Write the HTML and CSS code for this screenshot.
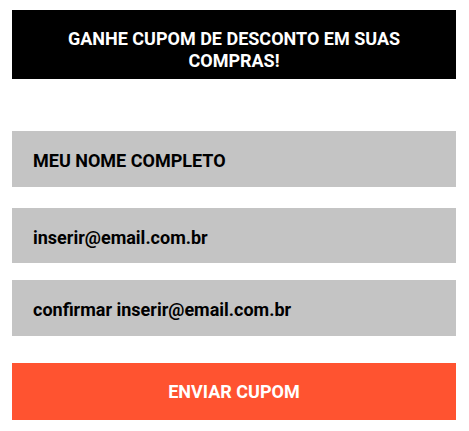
FILE: index.html
```html
<!DOCTYPE html>
<html>
<head>
<meta charset="utf-8">
<link rel="stylesheet" href="styles.css">
</head>
<body>
<div class="wrap">
  <div class="banner">GANHE CUPOM DE DESCONTO EM SUAS<br>COMPRAS!</div>
  <form class="form">
    <div class="field field-name">MEU NOME COMPLETO</div>
    <div class="field field-email">inserir@email.com.br</div>
    <div class="field field-confirm">confirmar inserir@email.com.br</div>
    <div class="button">ENVIAR CUPOM</div>
  </form>
</div>
</body>
</html>
```

FILE: styles.css
```css
html, body {
  margin: 0;
  padding: 0;
  background: #ffffff;
}
body {
  font-family: Roboto, "Liberation Sans", sans-serif;
}
.wrap {
  width: 444px;
  margin: 10px 0 0 12px;
}
.banner {
  background: #000000;
  color: #ffffff;
  font-weight: 700;
  font-size: 18px;
  line-height: 22px;
  text-align: center;
  height: 69px;
  box-sizing: border-box;
  padding-top: 18px;
}
.form {
  display: flex;
  flex-direction: column;
  margin-top: 52px;
}
.field {
  background: #c4c4c4;
  height: 56px;
  box-sizing: border-box;
  padding-top: 3px;
  display: flex;
  align-items: center;
  padding-left: 21px;
  font-size: 18px;
  font-weight: 700;
  color: #000000;
}
.field-email {
  margin-top: 21px;
  height: 55px;
}
.field-confirm {
  margin-top: 17px;
}
.button {
  margin-top: 27px;
  background: #ff5330;
  height: 57px;
  display: flex;
  align-items: center;
  justify-content: center;
  color: #ffffff;
  font-weight: 700;
  font-size: 18px;
}
```
